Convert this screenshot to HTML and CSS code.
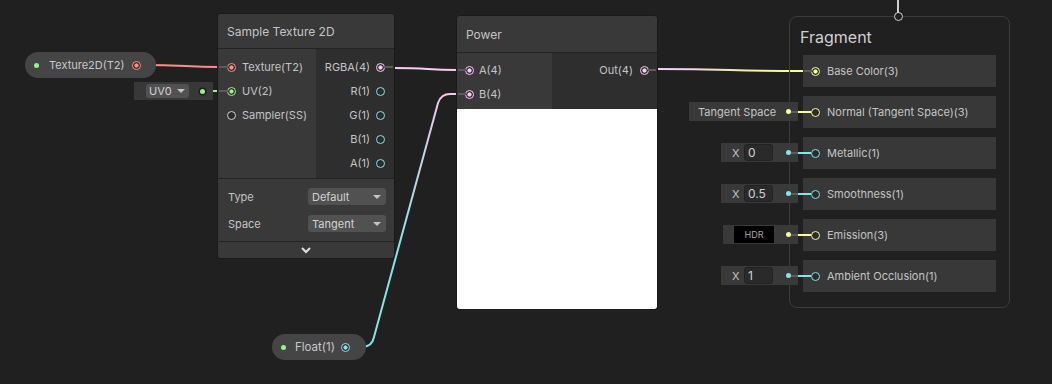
FILE: index.html
```html
<!DOCTYPE html>
<html lang="en">

<head>
    <meta charset="utf-8">
    <title>Shader Graph</title>
    <link rel="stylesheet" href="styles.css">
</head>

<body>
    <div class="graph">
        <!-- edges between nodes -->
        <svg class="wires" width="1052" height="384" viewBox="0 0 1052 384">
            <defs>
                <linearGradient id="floatToV4" gradientUnits="userSpaceOnUse" x1="0" y1="347" x2="0" y2="94">
                    <stop offset="0" stop-color="#84e4e7" />
                    <stop offset="0.35" stop-color="#84e4e7" />
                    <stop offset="1" stop-color="#f3c6f0" />
                </linearGradient>
                <linearGradient id="v4ToV3" gradientUnits="userSpaceOnUse" x1="657" y1="0" x2="803" y2="0">
                    <stop offset="0" stop-color="#fbcbf4" />
                    <stop offset="0.2" stop-color="#fbcbf4" />
                    <stop offset="0.65" stop-color="#f2f59a" />
                    <stop offset="1" stop-color="#f6ff9a" />
                </linearGradient>
            </defs>
            <path d="M 141 65 C 185 65 185 67 218 67" stroke="#ff8b8b" />
            <path d="M 206 91 L 218 91" stroke="#9aef92" />
            <path d="M 394 68 C 430 68 425 70 457 70" stroke="#fbcbf4" />
            <path d="M 350 347 L 362 347 Q 372 347 374 337 L 438 103 Q 441 94 450 94 L 457 94" stroke="url(#floatToV4)" />
            <path d="M 657 69 C 730 69 730 71 803 71" stroke="url(#v4ToV3)" />
        </svg>

        <!-- texture property -->
        <div class="prop-pill tex-prop">
            <span class="dot green"></span>
            <span class="pill-label">Texture2D(T2)</span>
            <span class="port t-tex linked"></span>
        </div>

        <div class="uv-field">
            <span class="dropdown small">UV0</span>
            <span class="dot green ringed"></span>
        </div>

        <!-- Sample Texture 2D node -->
        <div class="node sample">
            <div class="node-title">Sample Texture 2D</div>
            <div class="node-ports">
                <div class="inputs">
                    <div class="slot-row"><span class="port t-tex linked"></span>Texture(T2)</div>
                    <div class="slot-row"><span class="port t-v2 linked"></span>UV(2)</div>
                    <div class="slot-row"><span class="port t-ss"></span>Sampler(SS)</div>
                </div>
                <div class="outputs">
                    <div class="slot-row">RGBA(4)<span class="port t-v4 linked"></span></div>
                    <div class="slot-row">R(1)<span class="port t-v1"></span></div>
                    <div class="slot-row">G(1)<span class="port t-v1"></span></div>
                    <div class="slot-row">B(1)<span class="port t-v1"></span></div>
                    <div class="slot-row">A(1)<span class="port t-v1"></span></div>
                </div>
            </div>
            <div class="node-controls">
                <div class="control-row"><span>Type</span><span class="dropdown">Default</span></div>
                <div class="control-row"><span>Space</span><span class="dropdown">Tangent</span></div>
            </div>
            <div class="node-expand">
                <svg width="12" height="8" viewBox="0 0 12 8"><polyline points="2,2 6,6 10,2" /></svg>
            </div>
        </div>

        <!-- Power node -->
        <div class="node power">
            <div class="node-title">Power</div>
            <div class="node-ports">
                <div class="inputs">
                    <div class="slot-row"><span class="port t-v4 linked"></span>A(4)</div>
                    <div class="slot-row"><span class="port t-v4 linked"></span>B(4)</div>
                </div>
                <div class="outputs">
                    <div class="slot-row">Out(4)<span class="port t-v4 linked"></span></div>
                </div>
            </div>
            <div class="preview"></div>
        </div>

        <!-- float property -->
        <div class="prop-pill float-prop">
            <span class="dot green"></span>
            <span class="pill-label">Float(1)</span>
            <span class="port t-v1 linked"></span>
        </div>

        <!-- master stack -->
        <div class="stack">
            <span class="stack-port"></span>
            <div class="stack-title">Fragment</div>
            <div class="stack-slots">
                <div class="block-slot"><span class="port t-v3 linked"></span>Base Color(3)</div>
                <div class="block-slot">
                    <div class="inline-prop text-prop t-v3"><span>Tangent Space</span><span class="dot"></span></div>
                    <span class="port t-v3"></span>Normal (Tangent Space)(3)
                </div>
                <div class="block-slot">
                    <div class="inline-prop num-prop t-v1"><span class="axis">X</span><span class="num-field">0</span><span class="dot"></span></div>
                    <span class="port t-v1"></span>Metallic(1)
                </div>
                <div class="block-slot">
                    <div class="inline-prop num-prop t-v1"><span class="axis">X</span><span class="num-field">0.5</span><span class="dot"></span></div>
                    <span class="port t-v1"></span>Smoothness(1)
                </div>
                <div class="block-slot">
                    <div class="inline-prop hdr-prop t-v3"><span class="hdr-field">HDR</span><span class="dot"></span></div>
                    <span class="port t-v3"></span>Emission(3)
                </div>
                <div class="block-slot">
                    <div class="inline-prop num-prop t-v1"><span class="axis">X</span><span class="num-field">1</span><span class="dot"></span></div>
                    <span class="port t-v1"></span>Ambient Occlusion(1)
                </div>
            </div>
        </div>
    </div>
</body>

</html>
```

FILE: styles.css
```css
body {
    margin: 0;
    background: #202020;
}

.graph {
    position: relative;
    width: 1052px;
    height: 384px;
    overflow: hidden;
    background: #202020;
    font-family: Inter, "Noto Sans", sans-serif;
    font-size: 11px;
    color: #c4c4c4;
}

.wires {
    position: absolute;
    left: 0;
    top: 0;
}

.wires path {
    fill: none;
    stroke-width: 2;
}

/* port colours by type */
.t-tex { color: #ff8b8b; }
.t-v1 { color: #84e4e7; }
.t-v2 { color: #9aef92; }
.t-v3 { color: #f6ff9a; }
.t-v4 { color: #fbcbf4; }
.t-ss { color: #d0d0d0; }

.port {
    position: relative;
    flex: none;
    box-sizing: border-box;
    width: 9px;
    height: 9px;
    border: 1.5px solid currentColor;
    border-radius: 50%;
    background: #2b2b2b;
}

.port.linked {
    background: radial-gradient(circle, currentColor 0 1.8px, #2b2b2b 2.4px);
}

.inputs .port.linked::before,
.block-slot .port.linked::before {
    content: "";
    position: absolute;
    right: 100%;
    top: 2.5px;
    width: 9px;
    height: 2px;
    background: #5e5a5e;
}

.outputs .port.linked::after {
    content: "";
    position: absolute;
    left: 100%;
    top: 2.5px;
    width: 9px;
    height: 2px;
    background: #5e5a5e;
}

.dot {
    flex: none;
    width: 5px;
    height: 5px;
    border-radius: 50%;
    background: currentColor;
}

.dot.green {
    background: #9aef92;
}

.dot.ringed {
    box-shadow: 0 0 0 1.5px #1e1e1e;
}

/* property pills */
.prop-pill {
    position: absolute;
    box-sizing: border-box;
    height: 26px;
    border-radius: 13px;
    background: #454545;
    display: flex;
    align-items: center;
    padding: 0 15px 0 9px;
    color: #c8c8c8;
}

.pill-label {
    margin-left: 10px;
}

.prop-pill .port {
    margin-left: auto;
}

.tex-prop {
    left: 25px;
    top: 52px;
    width: 131px;
}

.float-prop {
    left: 272px;
    top: 334px;
    width: 94px;
    padding-right: 16px;
    font-size: 11.5px;
}

.float-prop .pill-label {
    margin-left: 9px;
}

.uv-field {
    position: absolute;
    left: 134px;
    top: 82px;
    box-sizing: border-box;
    width: 79px;
    height: 18px;
    background: #383838;
    display: flex;
    align-items: center;
    padding: 0 8px 0 12px;
}

.uv-field .dot {
    margin-left: auto;
}

.dropdown {
    position: relative;
    box-sizing: border-box;
    width: 78px;
    height: 17px;
    border-radius: 3px;
    background: #515151;
    display: flex;
    align-items: center;
    padding-left: 4px;
    color: #d2d2d2;
}

.dropdown::after {
    content: "";
    position: absolute;
    right: 5px;
    top: 7px;
    border-left: 4px solid transparent;
    border-right: 4px solid transparent;
    border-top: 4px solid #c4c4c4;
}

.dropdown.small {
    width: 43px;
    height: 14px;
    padding-left: 3px;
}

.dropdown.small::after {
    top: 5px;
    right: 4px;
}

/* nodes */
.node {
    position: absolute;
    box-sizing: border-box;
    border: 1px solid #1a1a1a;
    border-radius: 4px;
    overflow: hidden;
    background: #2e2e2e;
    display: flex;
    flex-direction: column;
}

.node-title {
    flex: none;
    box-sizing: border-box;
    height: 35px;
    background: #393939;
    border-bottom: 1px solid #232323;
    display: flex;
    align-items: center;
    padding-left: 9px;
    font-size: 12px;
    color: #c4c4c4;
}

.node-ports {
    display: flex;
}

.inputs {
    background: #393939;
    padding: 6px 0 3px;
}

.outputs {
    flex: 1;
    background: #2e2e2e;
    padding: 6px 0 3px;
}

.slot-row {
    height: 24px;
    display: flex;
    align-items: center;
    gap: 6px;
}

.inputs .slot-row {
    padding-left: 9px;
}

.outputs .slot-row {
    justify-content: flex-end;
    padding-right: 9px;
}

.sample {
    left: 217px;
    top: 13px;
    width: 178px;
    height: 246px;
}

.sample .inputs {
    width: 98px;
}

.node-controls {
    border-top: 1px solid #232323;
    background: #393939;
    padding: 9px 8px 9px 10px;
    display: flex;
    flex-direction: column;
    gap: 10px;
}

.control-row {
    display: flex;
    align-items: center;
    justify-content: space-between;
}

.node-expand {
    flex: 1;
    border-top: 1px solid #232323;
    background: #393939;
    display: flex;
    align-items: center;
    justify-content: center;
}

.node-expand polyline {
    fill: none;
    stroke: #e0e0e0;
    stroke-width: 2;
}

.power {
    left: 456px;
    top: 15px;
    width: 202px;
    height: 295px;
}

.power .node-title {
    height: 37px;
}

.power .inputs {
    width: 95px;
    padding: 5px 0 3px;
}

.power .outputs {
    padding: 5px 0 3px;
}

.power .inputs .slot-row {
    padding-left: 8px;
    gap: 5px;
}

.power .outputs .slot-row {
    padding-right: 8px;
    gap: 7px;
}

.power .inputs .port.linked::before {
    width: 8px;
}

.power .outputs .port.linked::after {
    width: 8px;
}

.preview {
    flex: 1;
    background: #ffffff;
}

/* master stack */
.stack {
    position: absolute;
    left: 789px;
    top: 16px;
    box-sizing: border-box;
    width: 221px;
    height: 292px;
    border: 1px solid #3c3c3c;
    border-radius: 8px;
    padding: 9px 13px 0 13px;
}

.stack-port {
    position: absolute;
    left: 104px;
    top: -5px;
    box-sizing: border-box;
    width: 9px;
    height: 9px;
    border: 1.5px solid #cfcfcf;
    border-radius: 50%;
    background: #202020;
}

.stack-port::before {
    content: "";
    position: absolute;
    left: 2px;
    bottom: 100%;
    width: 2px;
    height: 20px;
    background: #cfcfcf;
}

.stack-title {
    height: 22px;
    line-height: 22px;
    margin: 0 0 7px -3px;
    font-size: 16px;
    color: #d0d0d0;
}

.stack-slots {
    display: flex;
    flex-direction: column;
    gap: 9px;
}

.block-slot {
    position: relative;
    box-sizing: border-box;
    height: 32px;
    background: #383838;
    display: flex;
    align-items: center;
    padding-left: 8px;
    gap: 7px;
    color: #c4c4c4;
}

.block-slot .port.linked::before {
    width: 8px;
}

.inline-prop {
    position: absolute;
    right: calc(100% + 5px);
    top: 6px;
    box-sizing: border-box;
    height: 19px;
    background: #393939;
    display: flex;
    align-items: center;
    padding-right: 7px;
}

/* connector from the inline value to the slot port */
.inline-prop::before {
    content: "";
    position: absolute;
    right: 0;
    top: 8.5px;
    width: 7px;
    height: 2px;
    background: #5c5c5c;
}

.inline-prop::after {
    content: "";
    position: absolute;
    left: 100%;
    top: 8.5px;
    width: 13px;
    height: 2px;
    background: currentColor;
}

.inline-prop .dot {
    margin-left: auto;
}

.text-prop {
    width: 109px;
    padding-left: 9px;
}

.text-prop span:first-child {
    color: #c4c4c4;
}

.num-prop {
    width: 77px;
    padding-left: 11px;
}

.axis {
    width: 12px;
    color: #c4c4c4;
}

.num-field {
    box-sizing: border-box;
    width: 29px;
    height: 17px;
    border: 1px solid #222222;
    border-radius: 3px;
    background: #2a2a2a;
    padding-left: 3px;
    font-size: 12px;
    line-height: 15px;
    color: #d2d2d2;
}

.hdr-prop {
    width: 75px;
    padding-left: 11px;
}

.hdr-field {
    width: 40px;
    height: 17px;
    background: #000000;
    text-align: center;
    line-height: 17px;
    font-size: 9px;
    color: #a8a8a8;
}
```
